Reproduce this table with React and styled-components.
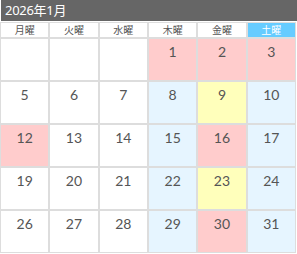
import React from "react";
import styled, { createGlobalStyle } from "styled-components";

const Global = createGlobalStyle`
  html, body { margin: 0; padding: 0; background: #fff; }
  body { font-family: "Noto Sans", "Noto Sans CJK JP", sans-serif; }
`;

const Wrap = styled.div`
  width: 297px;
  display: flex;
  flex-direction: column;
`;

const Title = styled.div`
  height: 21px;
  background: #666;
  color: #fff;
  font-family: "Noto Sans", "Noto Sans CJK JP", sans-serif;
  font-size: 13px;
  line-height: 21px;
  padding-left: 4px;
  margin-left: 1px;
  margin-bottom: 1px;
  letter-spacing: -0.3px;
`;

const Grid = styled.div`
  display: grid;
  grid-template-columns: repeat(6, 1fr);
  grid-template-rows: 14px repeat(5, 41px);
  gap: 2px;
  padding: 1px;
  background: #ddd;
  width: 296px;
  box-sizing: border-box;
`;

const Head = styled.div`
  background: ${(p) => (p.$sat ? "#66ccff" : "#fff")};
  color: ${(p) => (p.$sat ? "#fff" : "#555")};
  font-family: "Noto Sans CJK JP", sans-serif;
  font-size: 10px;
  line-height: 14px;
  text-align: center;
`;

const bgs = {
  none: "#fff",
  pink: "#ffcccc",
  blue: "#e6f5ff",
  yellow: "#ffffbb",
};

const Cell = styled.div`
  background: ${(p) => bgs[p.$bg]};
  color: #555;
  font-family: "Lato", "Noto Sans", sans-serif;
  font-size: 14px;
  line-height: 16px;
  padding-top: 5px;
  text-align: center;
`;

const heads = ["月曜", "火曜", "水曜", "木曜", "金曜", "土曜"];

const rows = [
  [["", "none"], ["", "none"], ["", "none"], ["1", "pink"], ["2", "pink"], ["3", "pink"]],
  [["5", "none"], ["6", "none"], ["7", "none"], ["8", "blue"], ["9", "yellow"], ["10", "blue"]],
  [["12", "pink"], ["13", "none"], ["14", "none"], ["15", "blue"], ["16", "pink"], ["17", "blue"]],
  [["19", "none"], ["20", "none"], ["21", "none"], ["22", "blue"], ["23", "yellow"], ["24", "blue"]],
  [["26", "none"], ["27", "none"], ["28", "none"], ["29", "blue"], ["30", "pink"], ["31", "blue"]],
];

export default function App() {
  return (
    <Wrap>
      <Global />
      <Title>2026年1月</Title>
      <Grid>
        {heads.map((h, i) => (
          <Head key={h} $sat={i === 5}>{h}</Head>
        ))}
        {rows.flat().map(([d, bg], i) => (
          <Cell key={i} $bg={bg}>{d}</Cell>
        ))}
      </Grid>
    </Wrap>
  );
}
